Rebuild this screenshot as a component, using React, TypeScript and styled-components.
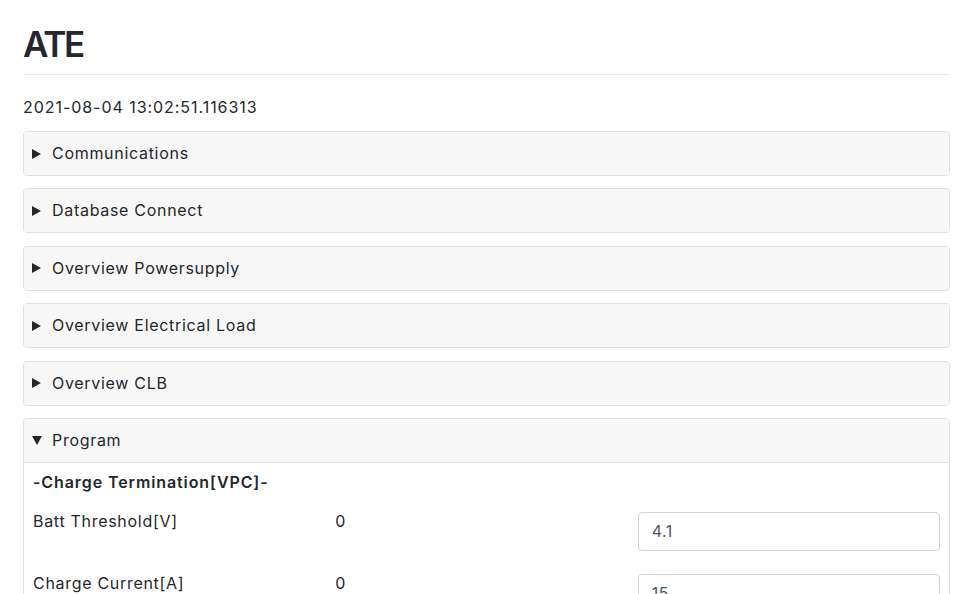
import React from "react";
import styled, { createGlobalStyle } from "styled-components";

const Global = createGlobalStyle`
  html, body { margin: 0; padding: 0; background: #fff; }
  body {
    font-family: Inter, "Noto Sans", "Liberation Sans", sans-serif;
    font-size: 16px;
    line-height: 1.5;
    color: #25272c;
    letter-spacing: 0.7px;
  }
  * { box-sizing: border-box; }
`;

const Page = styled.div`
  width: 927px;
  margin-left: 23px;
  padding-top: 23px;
`;

const Title = styled.h1`
  margin: 0 0 9px;
  font-size: 35px;
  line-height: 42px;
  font-weight: 600;
  letter-spacing: -2.2px;
`;

const Rule = styled.hr`
  margin: 0;
  border: 0;
  border-top: 1px solid #e6e7ea;
`;

const Stamp = styled.div`
  margin: 20px 0 12px;
  line-height: 24px;
  letter-spacing: 0.95px;
`;

const Panel = styled.div`
  border: 1px solid #e0e0e0;
  border-radius: 4px;
  background: #fff;
  margin-bottom: 12.4px;
  overflow: hidden;
`;

const Header = styled.div<{ $open?: boolean }>`
  display: flex;
  align-items: center;
  gap: 10px;
  padding: 9px 9px 10px 8px;
  line-height: 24px;
  background: #f7f7f7;
  border-bottom: ${(p) => (p.$open ? "1px solid #e0e0e0" : "0")};
`;

const Caret = styled.svg`
  width: 10px;
  height: 10px;
  flex: none;
  margin-top: 1px;
  fill: #25272c;
`;

const Body = styled.div`
  padding: 7px 9px 0;
`;

const Section = styled.div`
  font-weight: 600;
  line-height: 24px;
  margin-bottom: 15px;
  letter-spacing: 0.9px;
`;

const Row = styled.div`
  display: grid;
  grid-template-columns: repeat(3, 1fr);
  height: 62px;
`;

const Cell = styled.div`
  line-height: 24px;
`;

const Input = styled.input`
  display: block;
  width: 100%;
  height: 39px;
  margin-top: 3px;
  padding: 6px 13px;
  font: inherit;
  letter-spacing: 0.5px;
  color: #50555c;
  border: 1px solid #ced4da;
  border-radius: 4px;
  background: #fff;
  outline: none;
`;

const Arrow = ({ open }: { open?: boolean }) => (
  <Caret viewBox="0 0 10 10">
    {open ? <polygon points="0,1 10,1 5,10" /> : <polygon points="0,0 9,5 0,10" />}
  </Caret>
);

const closed = [
  "Communications",
  "Database Connect",
  "Overview Powersupply",
  "Overview Electrical Load",
  "Overview CLB",
];

const rows = [
  { label: "Batt Threshold[V]", value: "0", input: "4.1" },
  { label: "Charge Current[A]", value: "0", input: "15" },
  { label: "Charge Time[s]", value: "0", input: "10" },
];

export default function App() {
  return (
    <>
      <Global />
      <Page>
        <Title>ATE</Title>
        <Rule />
        <Stamp>2021-08-04 13:02:51.116313</Stamp>
        {closed.map((t) => (
          <Panel key={t}>
            <Header>
              <Arrow />
              <span>{t}</span>
            </Header>
          </Panel>
        ))}
        <Panel>
          <Header $open>
            <Arrow open />
            <span>Program</span>
          </Header>
          <Body>
            <Section>-Charge Termination[VPC]-</Section>
            {rows.map((r) => (
              <Row key={r.label}>
                <Cell>{r.label}</Cell>
                <Cell>{r.value}</Cell>
                <div>
                  <Input defaultValue={r.input} />
                </div>
              </Row>
            ))}
          </Body>
        </Panel>
      </Page>
    </>
  );
}
